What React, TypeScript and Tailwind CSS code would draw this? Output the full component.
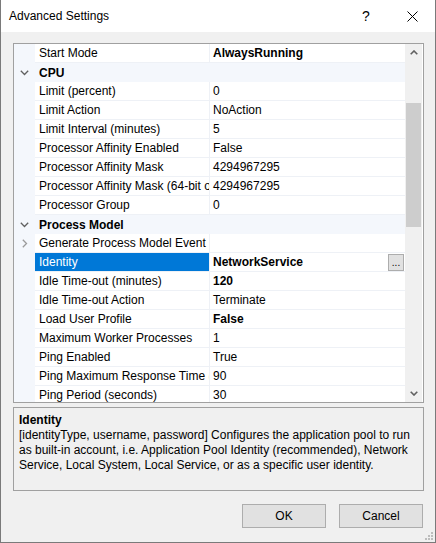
import React from 'react'

type Row =
  | { kind: 'cat'; label: string }
  | { kind: 'prop'; name: string; value: string; bold?: boolean; expander?: boolean; selected?: boolean; button?: boolean }

const rows: Row[] = [
  { kind: 'prop', name: 'Start Mode', value: 'AlwaysRunning', bold: true },
  { kind: 'cat', label: 'CPU' },
  { kind: 'prop', name: 'Limit (percent)', value: '0' },
  { kind: 'prop', name: 'Limit Action', value: 'NoAction' },
  { kind: 'prop', name: 'Limit Interval (minutes)', value: '5' },
  { kind: 'prop', name: 'Processor Affinity Enabled', value: 'False' },
  { kind: 'prop', name: 'Processor Affinity Mask', value: '4294967295' },
  { kind: 'prop', name: 'Processor Affinity Mask (64-bit option)', value: '4294967295' },
  { kind: 'prop', name: 'Processor Group', value: '0' },
  { kind: 'cat', label: 'Process Model' },
  { kind: 'prop', name: 'Generate Process Model Event Log Entry', value: '', expander: true },
  { kind: 'prop', name: 'Identity', value: 'NetworkService', bold: true, selected: true, button: true },
  { kind: 'prop', name: 'Idle Time-out (minutes)', value: '120', bold: true },
  { kind: 'prop', name: 'Idle Time-out Action', value: 'Terminate' },
  { kind: 'prop', name: 'Load User Profile', value: 'False', bold: true },
  { kind: 'prop', name: 'Maximum Worker Processes', value: '1' },
  { kind: 'prop', name: 'Ping Enabled', value: 'True' },
  { kind: 'prop', name: 'Ping Maximum Response Time (seconds)', value: '90' },
  { kind: 'prop', name: 'Ping Period (seconds)', value: '30' },
]

function ChevronDown({ color = '#606060' }: { color?: string }) {
  return (
    <svg width="9" height="6" viewBox="0 0 9 6" aria-hidden>
      <path d="M0.8 0.8 L4.5 4.5 L8.2 0.8" fill="none" stroke={color} strokeWidth="1.3" />
    </svg>
  )
}

function ChevronRight() {
  return (
    <svg width="6" height="9" viewBox="0 0 6 9" aria-hidden>
      <path d="M0.8 0.8 L4.5 4.5 L0.8 8.2" fill="none" stroke="#9a9a9a" strokeWidth="1.3" />
    </svg>
  )
}

function GridRow({ row }: { row: Row }) {
  if (row.kind === 'cat') {
    return (
      <div className="flex h-[19px] shrink-0 bg-[#f4f7fc]">
        <div className="flex w-[21px] shrink-0 items-center justify-center">
          <ChevronDown />
        </div>
        <div className="pl-[4px] pt-[1px] leading-[18px] font-bold">{row.label}</div>
      </div>
    )
  }
  return (
    <div className="flex h-[19px] shrink-0">
      <div className="flex w-[21px] shrink-0 items-center justify-center bg-[#f4f7fc]">
        {row.expander && <ChevronRight />}
      </div>
      <div
        className={`w-[175px] shrink-0 overflow-hidden whitespace-nowrap border-b border-r border-[#eef1f6] pl-[4px] pt-[1px] leading-[17px] ${
          row.selected ? 'bg-[#0078d7] text-white' : ''
        }`}
      >
        {row.name}
      </div>
      <div className="flex min-w-0 flex-1 items-center border-b border-[#eef1f6] pl-[3px]">
        <span className={`flex-1 whitespace-nowrap pt-[1px] leading-[17px] ${row.bold ? 'font-bold' : ''}`}>{row.value}</span>
        {row.button && (
          <div className="mr-[1px] flex h-[17px] w-[16px] items-end justify-center border border-[#adadad] bg-[#e1e1e1] pb-[2px] text-[10px] leading-[10px]">
            ...
          </div>
        )}
      </div>
    </div>
  )
}

export default function App() {
  return (
    <div className="relative flex h-[543px] w-[436px] flex-col border-x border-b border-[#7a7a7a] bg-[#f0f0f0] font-['Segoe_UI','Liberation_Sans',sans-serif] text-[12px] text-black">
      <div className="flex h-[32px] shrink-0 items-center bg-white">
        <div className="flex-1 pl-[8px] pb-[1px] text-[12px]">Advanced Settings</div>
        <div className="flex h-full w-[46px] items-center justify-center text-[14px]">?</div>
        <div className="flex h-full w-[46px] items-center justify-center">
          <svg width="11" height="11" viewBox="0 0 11 11" aria-hidden>
            <path d="M0.5 0.5 L10.5 10.5 M10.5 0.5 L0.5 10.5" stroke="#000" strokeWidth="1" />
          </svg>
        </div>
      </div>

      <div className="flex flex-1 flex-col pl-[12px] pr-[11px]">
        <div className="mt-[11px] flex h-[360px] border border-[#a0a0a0] bg-white">
          <div className="flex w-[391px] flex-col overflow-hidden">
            {rows.map((r, i) => (
              <GridRow key={i} row={r} />
            ))}
          </div>
          <div className="flex w-[17px] flex-col bg-[#f0f0f0]">
            <div className="flex h-[17px] shrink-0 items-center justify-center">
              <svg width="8" height="5" viewBox="0 0 8 5" aria-hidden>
                <path d="M0.7 4.3 L4 1 L7.3 4.3" fill="none" stroke="#606060" strokeWidth="1.6" />
              </svg>
            </div>
            <div className="flex-1">
              <div className="mx-[1px] mt-[42px] h-[124px] bg-[#cdcdcd]" />
            </div>
            <div className="flex h-[17px] shrink-0 items-center justify-center">
              <svg width="8" height="5" viewBox="0 0 8 5" aria-hidden>
                <path d="M0.7 0.7 L4 4 L7.3 0.7" fill="none" stroke="#606060" strokeWidth="1.6" />
              </svg>
            </div>
          </div>
        </div>

        <div className="mt-[4px] h-[84px] border border-[#a0a0a0] pl-[5px] pt-[5px] leading-[15px]">
          <div className="font-bold">Identity</div>
          <div className="whitespace-nowrap">
            <div>[identityType, username, password] Configures the application pool to run</div>
            <div>as built-in account, i.e. Application Pool Identity (recommended), Network</div>
            <div>Service, Local System, Local Service, or as a specific user identity.</div>
          </div>
        </div>

        <div className="mt-[13px] flex justify-end gap-[13px] pr-[1px]">
          <button className="h-[24px] w-[84px] border border-[#adadad] bg-[#e1e1e1] pb-[1px]">OK</button>
          <button className="h-[24px] w-[84px] border border-[#adadad] bg-[#e1e1e1] pb-[1px]">Cancel</button>
        </div>
      </div>

      <svg className="absolute bottom-[2px] right-[2px]" width="8" height="8" viewBox="0 0 8 8" aria-hidden>
        <rect x="6" y="0" width="2" height="2" fill="#bdbdbd" />
        <rect x="3" y="3" width="2" height="2" fill="#bdbdbd" />
        <rect x="6" y="3" width="2" height="2" fill="#bdbdbd" />
        <rect x="0" y="6" width="2" height="2" fill="#bdbdbd" />
        <rect x="3" y="6" width="2" height="2" fill="#bdbdbd" />
        <rect x="6" y="6" width="2" height="2" fill="#bdbdbd" />
      </svg>
    </div>
  )
}
